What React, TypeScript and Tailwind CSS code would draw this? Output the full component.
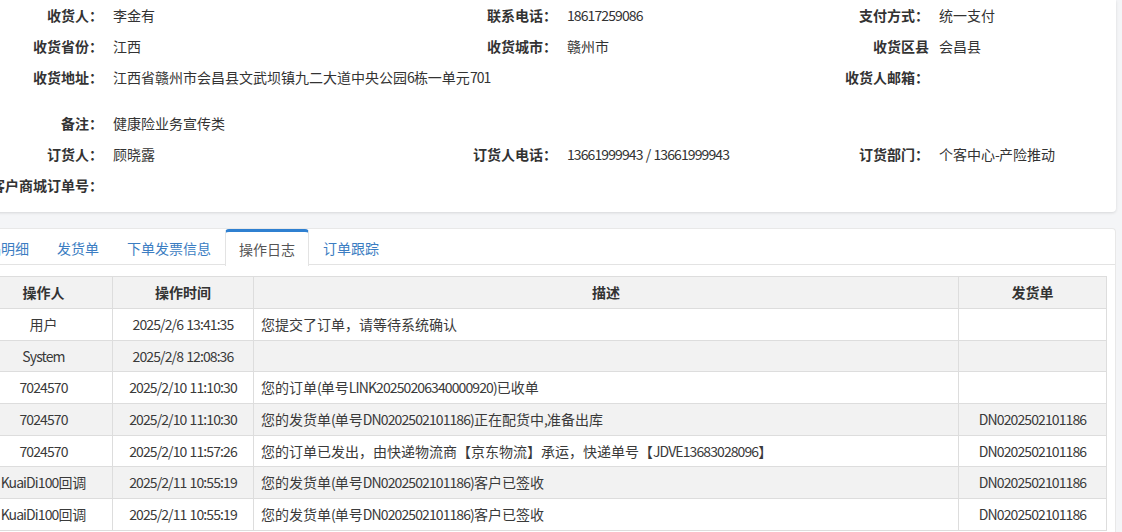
import React from 'react';

type Field = { label: string; value?: string };

const infoRows: { cols: Field[]; tall?: boolean }[] = [
  {
    cols: [
      { label: '收货人：', value: '李金有' },
      { label: '联系电话：', value: '18617259086' },
      { label: '支付方式：', value: '统一支付' },
    ],
  },
  {
    cols: [
      { label: '收货省份：', value: '江西' },
      { label: '收货城市：', value: '赣州市' },
      { label: '收货区县', value: '会昌县' },
    ],
  },
  {
    cols: [
      { label: '收货地址：', value: '江西省赣州市会昌县文武坝镇九二大道中央公园6栋一单元701' },
      { label: '' },
      { label: '收货人邮箱：' },
    ],
    tall: true,
  },
  {
    cols: [{ label: '备注：', value: '健康险业务宣传类' }, { label: '' }, { label: '' }],
  },
  {
    cols: [
      { label: '订货人：', value: '顾晓露' },
      { label: '订货人电话：', value: '13661999943 / 13661999943' },
      { label: '订货部门：', value: '个客中心-产险推动' },
    ],
  },
  {
    cols: [{ label: '客户商城订单号：' }, { label: '' }, { label: '' }],
  },
];

const colWidths = ['w-[454px]', 'w-[372px]', 'flex-1'];

const tabs = ['商品明细', '发货单', '下单发票信息', '操作日志', '订单跟踪'];
const activeTab = '操作日志';

const logs = [
  ['用户', '2025/2/6 13:41:35', '您提交了订单，请等待系统确认', ''],
  ['System', '2025/2/8 12:08:36', '', ''],
  ['7024570', '2025/2/10 11:10:30', '您的订单(单号LINK20250206340000920)已收单', ''],
  ['7024570', '2025/2/10 11:10:30', '您的发货单(单号DN0202502101186)正在配货中,准备出库', 'DN0202502101186'],
  ['7024570', '2025/2/10 11:57:26', '您的订单已发出，由快递物流商【京东物流】承运，快递单号【JDVE13683028096】', 'DN0202502101186'],
  ['KuaiDi100回调', '2025/2/11 10:55:19', '您的发货单(单号DN0202502101186)客户已签收', 'DN0202502101186'],
  ['KuaiDi100回调', '2025/2/11 10:55:19', '您的发货单(单号DN0202502101186)客户已签收', 'DN0202502101186'],
];

// latin runs are set a bit tighter so they match the narrower latin glyphs of the original
function Txt({ text = '' }: { text?: string }) {
  const parts = text.split(/([\x21-\x7E]+)/);
  return (
    <>
      {parts.map((p, i) =>
        /^[\x21-\x7E]+$/.test(p) ? (
          <span key={i} className="tracking-[-0.9px]">
            {p}
          </span>
        ) : (
          <React.Fragment key={i}>{p}</React.Fragment>
        )
      )}
    </>
  );
}

export default function App() {
  return (
    <div className="h-[532px] overflow-hidden bg-[#f4f5f7] font-['Noto_Sans_CJK_SC','Noto_Sans',sans-serif] text-[14px] text-[#333]">
      <div className="ml-[-36px] w-[1152px]">
        {/* Order info card */}
        <div className="rounded-b-[4px] bg-white pb-[11px] pl-[19px] shadow-[0_1px_3px_rgba(0,0,0,0.12)]">
          {infoRows.map((row, i) => (
            <div key={i} className={`flex ${row.tall ? 'h-[46px] items-start pt-[5px]' : 'h-[31px] items-center'}`}>
              {row.cols.map((col, j) => (
                <div key={j} className={`flex items-center ${colWidths[j]}`}>
                  <div className="flex w-[120px] shrink-0 justify-end whitespace-nowrap font-bold">
                    {col.label}
                  </div>
                  <div className="ml-[10px] whitespace-nowrap">
                    <Txt text={col.value} />
                  </div>
                </div>
              ))}
            </div>
          ))}
        </div>

        {/* Tabs + log table */}
        <div className="mt-[16px] rounded-t-[4px] border border-b-0 border-[#e8e8e8] bg-white px-[9px] pb-[20px]">
          <div className="-mx-[9px] flex h-[36px] border-b border-[#e3e3e3]">
            <div className="ml-[-6px] flex">
              {tabs.map(tab =>
                tab === activeTab ? (
                  <div
                    key={tab}
                    className="mb-[-1px] flex h-[37px] items-center rounded-t-[4px] border-x border-t-[3px] border-x-[#e3e3e3] border-t-[#2f80d1] bg-white px-[13px] text-[#555]"
                  >
                    {tab}
                  </div>
                ) : (
                  <div key={tab} className="flex h-[36px] items-center border-x border-transparent px-[13px] pt-[3px] text-[#3b7dc2]">
                    {tab}
                  </div>
                )
              )}
            </div>
          </div>

          <table className="mt-[11px] w-[1132px] table-fixed border-collapse text-[#3a3a3a]">
            <colgroup>
              <col className="w-[138px]" />
              <col className="w-[141px]" />
              <col className="w-[705px]" />
              <col className="w-[148px]" />
            </colgroup>
            <thead>
              <tr className="h-[32px] bg-[#f2f2f2] text-[#333]">
                <th className="border border-[#dddddd] font-bold">操作人</th>
                <th className="border border-[#dddddd] font-bold">操作时间</th>
                <th className="border border-[#dddddd] font-bold">描述</th>
                <th className="border border-[#dddddd] font-bold">发货单</th>
              </tr>
            </thead>
            <tbody>
              {logs.map((log, i) => (
                <tr key={i} className={`h-[31.7px] ${i % 2 === 1 ? 'bg-[#f2f2f2]' : 'bg-white'}`}>
                  <td className="border border-[#dddddd] text-center whitespace-nowrap">
                    <Txt text={log[0]} />
                  </td>
                  <td className="border border-[#dddddd] text-center whitespace-nowrap">
                    <Txt text={log[1]} />
                  </td>
                  <td className="border border-[#dddddd] px-[7px] whitespace-nowrap">
                    <Txt text={log[2]} />
                  </td>
                  <td className="border border-[#dddddd] text-center whitespace-nowrap">
                    <Txt text={log[3]} />
                  </td>
                </tr>
              ))}
            </tbody>
          </table>
        </div>
      </div>
    </div>
  );
}
